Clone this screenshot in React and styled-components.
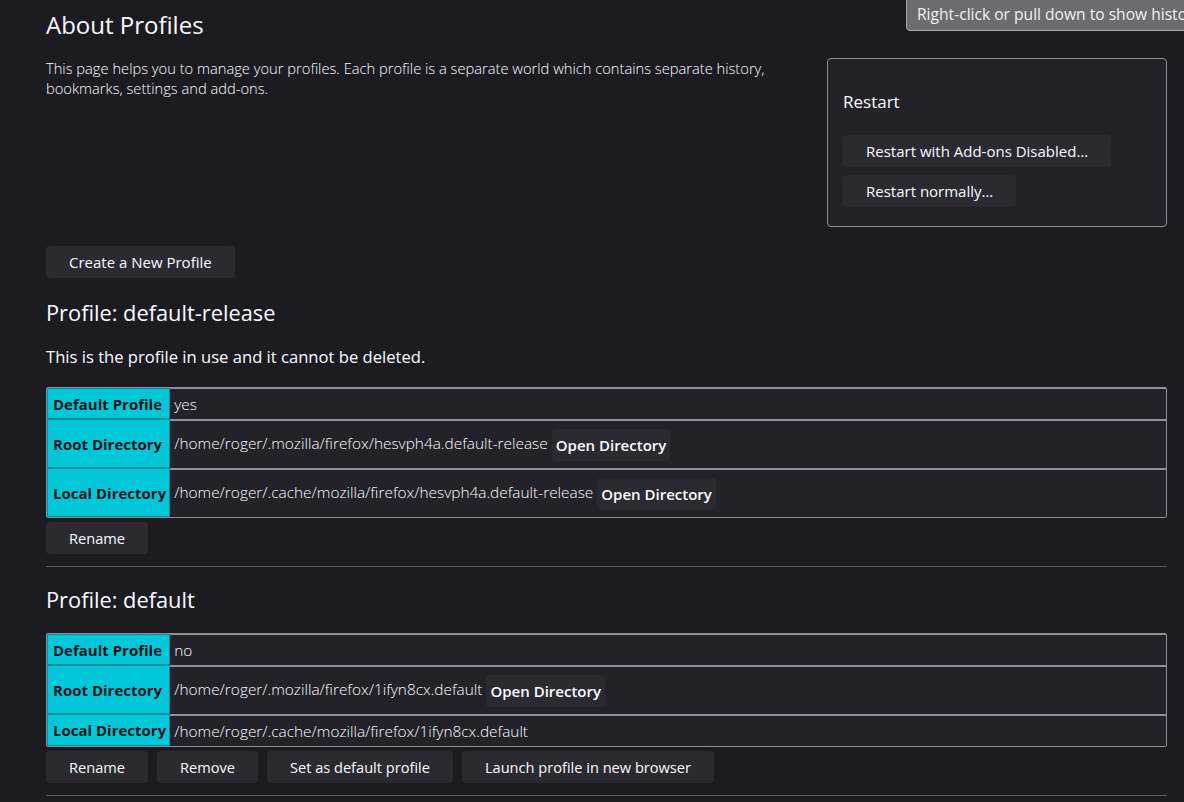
import React from "react";
import styled, { createGlobalStyle } from "styled-components";

const Global = createGlobalStyle`
  html, body { margin: 0; padding: 0; background: #1c1b22; }
  body {
    color: #fbfbfe;
    font-family: "Open Sans", "Noto Sans", sans-serif;
    font-size: 15px;
    overflow: hidden;
  }
  * { box-sizing: border-box; }
`;

const Page = styled.div`
  position: relative;
  width: 1184px;
  height: 802px;
  padding: 0 17px 0 46px;
  overflow: hidden;
`;

const Tooltip = styled.div`
  position: absolute;
  top: -1px;
  left: 906px;
  width: 320px;
  height: 32px;
  background: #6b6b70;
  border: 1px solid #a9a9ae;
  border-radius: 0 0 0 4px;
  color: #f0f0f4;
  font-size: 15.6px;
  line-height: 29px;
  padding-left: 10px;
  white-space: nowrap;
  overflow: hidden;
`;

const Title = styled.h1`
  margin: 0;
  padding-top: 10px;
  font-size: 24px;
  font-weight: 400;
  line-height: 30px;
`;

const Intro = styled.div`
  display: flex;
  align-items: flex-start;
  margin-top: 18px;
`;

const IntroText = styled.p`
  flex: 1;
  margin: 0;
  font-size: 14.7px;
  line-height: 20px;
  font-weight: 300;
  padding-right: 40px;
`;

const RestartBox = styled.aside`
  width: 340px;
  flex: none;
  background: #23222b;
  border: 1px solid #8f8f9d;
  border-radius: 4px;
  padding: 31px 15px 19px;
  display: flex;
  flex-direction: column;
  align-items: flex-start;
  gap: 8px;
`;

const BoxTitle = styled.h3`
  margin: 0 0 13px;
  font-size: 17px;
  font-weight: 400;
  line-height: 24px;
`;

const Button = styled.button`
  height: 32px;
  padding: 0 ${(p) => p.$pad ?? 23}px;
  border: none;
  border-radius: 4px;
  background: #2b2a33;
  color: #fbfbfe;
  font-family: inherit;
  font-size: ${(p) => p.$size ?? 15}px;
  font-weight: ${(p) => (p.$bold ? 600 : 400)};
  white-space: nowrap;
  cursor: pointer;
`;

const CreateRow = styled.div`
  margin-top: 19px;
`;

const ProfileTitle = styled.h2`
  margin: ${(p) => p.$mt ?? 20}px 0 0;
  font-size: 21.8px;
  font-weight: 400;
  line-height: 30px;
`;

const InUse = styled.p`
  margin: 17px 0 0;
  font-size: 16.6px;
  line-height: 24px;
`;

const Table = styled.table`
  width: 100%;
  margin-top: ${(p) => p.$mt}px;
  border-collapse: separate;
  border-spacing: 0;
  border: 1px solid #8f8f9d;
  border-radius: 2px;
`;

const HeadCell = styled.th`
  width: 123px;
  background: #00c8d9;
  color: #15141a;
  text-align: left;
  font-size: 15px;
  font-weight: 700;
  line-height: 20px;
  padding: 0 3px 0 5px;
  border: 1px solid #0b8c98;
  white-space: nowrap;
`;

const DataCell = styled.td`
  background: #23222b;
  font-size: 15.4px;
  font-weight: 300;
  line-height: 21px;
  padding: ${(p) => (p.$tall ? "8px 4px 7px" : "5px 4px 4px")};
  border-top: ${(p) => (p.$first ? "1px" : "2px")} solid #8f8f9d;
  white-space: nowrap;
`;

const CellButton = styled(Button)`
  margin-left: 4px;
  vertical-align: middle;
`;

const Actions = styled.div`
  display: flex;
  gap: 9px;
  margin-top: 4px;
`;

const Rule = styled.hr`
  margin: ${(p) => p.$mt}px 0 0;
  border: none;
  border-top: 1px solid #5b5b66;
`;

function ProfileTable({ rows, mt }) {
  return (
    <Table $mt={mt}>
      <tbody>
        {rows.map((r, i) => (
          <tr key={r.label}>
            <HeadCell>{r.label}</HeadCell>
            <DataCell $first={i === 0} $tall={r.button}>
              {r.value}
              {r.button && (
                <CellButton $bold $pad={4}>
                  Open Directory
                </CellButton>
              )}
            </DataCell>
          </tr>
        ))}
      </tbody>
    </Table>
  );
}

export default function App() {
  return (
    <>
      <Global />
      <Page>
        <Tooltip>Right-click or pull down to show history</Tooltip>
        <Title>About Profiles</Title>
        <Intro>
          <IntroText>
            This page helps you to manage your profiles. Each profile is a separate world which contains separate history,
            bookmarks, settings and add-ons.
          </IntroText>
          <RestartBox>
            <BoxTitle>Restart</BoxTitle>
            <Button>Restart with Add-ons Disabled…</Button>
            <Button>Restart normally…</Button>
          </RestartBox>
        </Intro>
        <CreateRow>
          <Button>Create a New Profile</Button>
        </CreateRow>

        <ProfileTitle>Profile: default-release</ProfileTitle>
        <InUse>This is the profile in use and it cannot be deleted.</InUse>
        <ProfileTable
          mt={18}
          rows={[
            { label: "Default Profile", value: "yes" },
            { label: "Root Directory", value: "/home/roger/.mozilla/firefox/hesvph4a.default-release", button: true },
            { label: "Local Directory", value: "/home/roger/.cache/mozilla/firefox/hesvph4a.default-release", button: true },
          ]}
        />
        <Actions>
          <Button $size={14.6}>Rename</Button>
        </Actions>
        <Rule $mt={12} />

        <ProfileTitle $mt={18}>Profile: default</ProfileTitle>
        <ProfileTable
          mt={18}
          rows={[
            { label: "Default Profile", value: "no" },
            { label: "Root Directory", value: "/home/roger/.mozilla/firefox/1ifyn8cx.default", button: true },
            { label: "Local Directory", value: "/home/roger/.cache/mozilla/firefox/1ifyn8cx.default" },
          ]}
        />
        <Actions>
          <Button $size={14.6}>Rename</Button>
          <Button $size={14.6}>Remove</Button>
          <Button $size={14.6}>Set as default profile</Button>
          <Button $size={14.6}>Launch profile in new browser</Button>
        </Actions>
        <Rule $mt={12} />
      </Page>
    </>
  );
}
